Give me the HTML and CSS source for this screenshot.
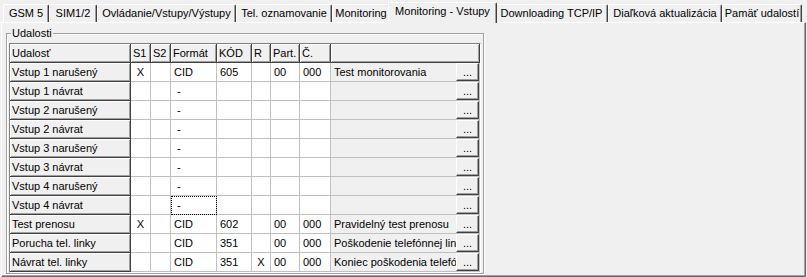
FILE: index.html
```html
<!DOCTYPE html>
<html lang="sk">
<head>
<meta charset="utf-8">
<title>Monitoring - Vstupy</title>
<link rel="stylesheet" href="styles.css">
</head>
<body>
<div class="tabs">
  <div class="tab w-gsm">GSM 5</div>
  <div class="tab w-sim">SIM1/2</div>
  <div class="tab w-ovl">Ovládanie/Vstupy/Výstupy</div>
  <div class="tab w-tel">Tel. oznamovanie</div>
  <div class="tab w-mon">Monitoring</div>
  <div class="tab w-monv active">Monitoring - Vstupy</div>
  <div class="tab w-dl">Downloading TCP/IP</div>
  <div class="tab w-dia">Diaľková aktualizácia</div>
  <div class="tab w-pam">Pamäť udalostí</div>
</div>
<div class="panel">
  <div class="group">
    <span class="group-label">Udalosti</span>
    <div class="grid">
      <div class="fx">Udalosť</div><div class="fx">S1</div><div class="fx">S2</div><div class="fx">Formát</div><div class="fx">KÓD</div><div class="fx">R</div><div class="fx">Part.</div><div class="fx">Č.</div><div class="fx"></div>

      <div class="fx">Vstup 1 narušený</div><div class="c x">X</div><div class="c"></div><div class="c">CID</div><div class="c">605</div><div class="c"></div><div class="c">00</div><div class="c">000</div><div class="d"><span>Test monitorovania</span><div class="btn">...</div></div>

      <div class="fx">Vstup 1 návrat</div><div class="c"></div><div class="c"></div><div class="c dash">-</div><div class="c"></div><div class="c"></div><div class="c"></div><div class="c"></div><div class="d"><span></span><div class="btn">...</div></div>

      <div class="fx">Vstup 2 narušený</div><div class="c"></div><div class="c"></div><div class="c dash">-</div><div class="c"></div><div class="c"></div><div class="c"></div><div class="c"></div><div class="d"><span></span><div class="btn">...</div></div>

      <div class="fx">Vstup 2 návrat</div><div class="c"></div><div class="c"></div><div class="c dash">-</div><div class="c"></div><div class="c"></div><div class="c"></div><div class="c"></div><div class="d"><span></span><div class="btn">...</div></div>

      <div class="fx">Vstup 3 narušený</div><div class="c"></div><div class="c"></div><div class="c dash">-</div><div class="c"></div><div class="c"></div><div class="c"></div><div class="c"></div><div class="d"><span></span><div class="btn">...</div></div>

      <div class="fx">Vstup 3 návrat</div><div class="c"></div><div class="c"></div><div class="c dash">-</div><div class="c"></div><div class="c"></div><div class="c"></div><div class="c"></div><div class="d"><span></span><div class="btn">...</div></div>

      <div class="fx">Vstup 4 narušený</div><div class="c"></div><div class="c"></div><div class="c dash">-</div><div class="c"></div><div class="c"></div><div class="c"></div><div class="c"></div><div class="d"><span></span><div class="btn">...</div></div>

      <div class="fx">Vstup 4 návrat</div><div class="c"></div><div class="c"></div><div class="c dash focus">-</div><div class="c"></div><div class="c"></div><div class="c"></div><div class="c"></div><div class="d"><span></span><div class="btn">...</div></div>

      <div class="fx">Test prenosu</div><div class="c x">X</div><div class="c"></div><div class="c">CID</div><div class="c">602</div><div class="c"></div><div class="c">00</div><div class="c">000</div><div class="d"><span>Pravidelný test prenosu</span><div class="btn">...</div></div>

      <div class="fx">Porucha tel. linky</div><div class="c"></div><div class="c"></div><div class="c">CID</div><div class="c">351</div><div class="c"></div><div class="c">00</div><div class="c">000</div><div class="d"><span>Poškodenie telefónnej linky</span><div class="btn">...</div></div>

      <div class="fx">Návrat tel. linky</div><div class="c"></div><div class="c"></div><div class="c">CID</div><div class="c">351</div><div class="c x">X</div><div class="c">00</div><div class="c">000</div><div class="d"><span>Koniec poškodenia telefónnej linky</span><div class="btn">...</div></div>
    </div>
  </div>
</div>
</body>
</html>
```

FILE: styles.css
```css
* { box-sizing: border-box; }
html, body { margin: 0; padding: 0; }
body {
  background: #f0f0f0;
  font-family: "Liberation Sans", Arial, sans-serif;
  font-size: 11px;
  color: #000;
  width: 807px;
  height: 277px;
  overflow: hidden;
}

/* tab strip */
.tabs {
  display: flex;
  align-items: flex-end;
  height: 22px;
  padding-left: 3px;
}
.tab {
  flex: none;
  height: 18px;
  line-height: 17px;
  text-align: center;
  white-space: nowrap;
  overflow: hidden;
  background: #f0f0f0;
  border-top: 1px solid #fff;
  border-left: 1px solid #fff;
  border-right: 1px solid #404040;
  box-shadow: inset -1px 0 0 #a0a0a0;
  border-radius: 2px 2px 0 0;
}
.tab.active {
  height: 21px;
  line-height: 16px;
  margin: 0 -2px -1px;
  position: relative;
  z-index: 2;
}
.w-gsm { width: 46px; }
.w-sim { width: 48px; }
.w-ovl { width: 139px; }
.w-tel { width: 96px; }
.w-mon { width: 58px; }
.w-monv { width: 109px; }
.w-dl { width: 113px; }
.w-dia { width: 114px; }
.w-pam { width: 80px; }

/* tab page */
.panel {
  margin-left: 1px;
  width: 805px;
  height: 255px;
  border-top: 1px solid #fff;
  border-left: 1px solid #fff;
  border-right: 1px solid #696969;
  border-bottom: 1px solid #696969;
  box-shadow: inset -1px -1px 0 #a0a0a0;
  padding: 10px 0 0 4px;
}

/* group box */
.group {
  position: relative;
  width: 478px;
  height: 241px;
  border: 1px solid #a0a0a0;
  box-shadow: 1px 1px 0 #fff, inset 1px 1px 0 #fff;
  padding: 9px 0 0 2px;
}
.group-label {
  position: absolute;
  left: 4px;
  top: -7px;
  padding: 0 1px;
  line-height: 13px;
  background: #f0f0f0;
}

/* string grid */
.grid {
  display: grid;
  grid-template-columns: 121px 20px 20px 46px 35px 19px 29px 31px 149px;
  grid-auto-rows: 19px;
  width: 472px;
  border-top: 1px solid #808080;
  border-left: 1px solid #808080;
  border-right: 1px solid #fff;
  border-bottom: 1px solid #fff;
}
.grid > div {
  white-space: nowrap;
  overflow: hidden;
  line-height: 18px;
}
.fx {
  background: #f0f0f0;
  border-right: 1px solid #404040;
  border-bottom: 1px solid #404040;
  box-shadow: inset 1px 1px 0 #fff, inset -1px -1px 0 #a0a0a0;
  padding-left: 2px;
}
.c {
  background: #fff;
  border-right: 1px solid #c0c0c0;
  border-bottom: 1px solid #c0c0c0;
  padding-left: 3px;
}
.c.x { text-align: center; padding-left: 0; }
.c.dash { padding-left: 6px; }
.c.focus { outline: 1px dotted #000; outline-offset: -1px; }
.d {
  display: flex;
  background: #f0f0f0;
  border-right: 1px solid #c0c0c0;
  border-bottom: 1px solid #c0c0c0;
  padding-left: 3px;
}
.d span {
  flex: 1;
  min-width: 0;
  overflow: hidden;
  white-space: nowrap;
}
.btn {
  flex: none;
  width: 23px;
  height: 18px;
  background: #f0f0f0;
  border-top: 1px solid #fff;
  border-left: 1px solid #fff;
  border-right: 1px solid #404040;
  border-bottom: 1px solid #404040;
  box-shadow: inset -1px -1px 0 #a0a0a0;
  text-align: center;
  line-height: 15px;
  padding-top: 1px;
}
```
